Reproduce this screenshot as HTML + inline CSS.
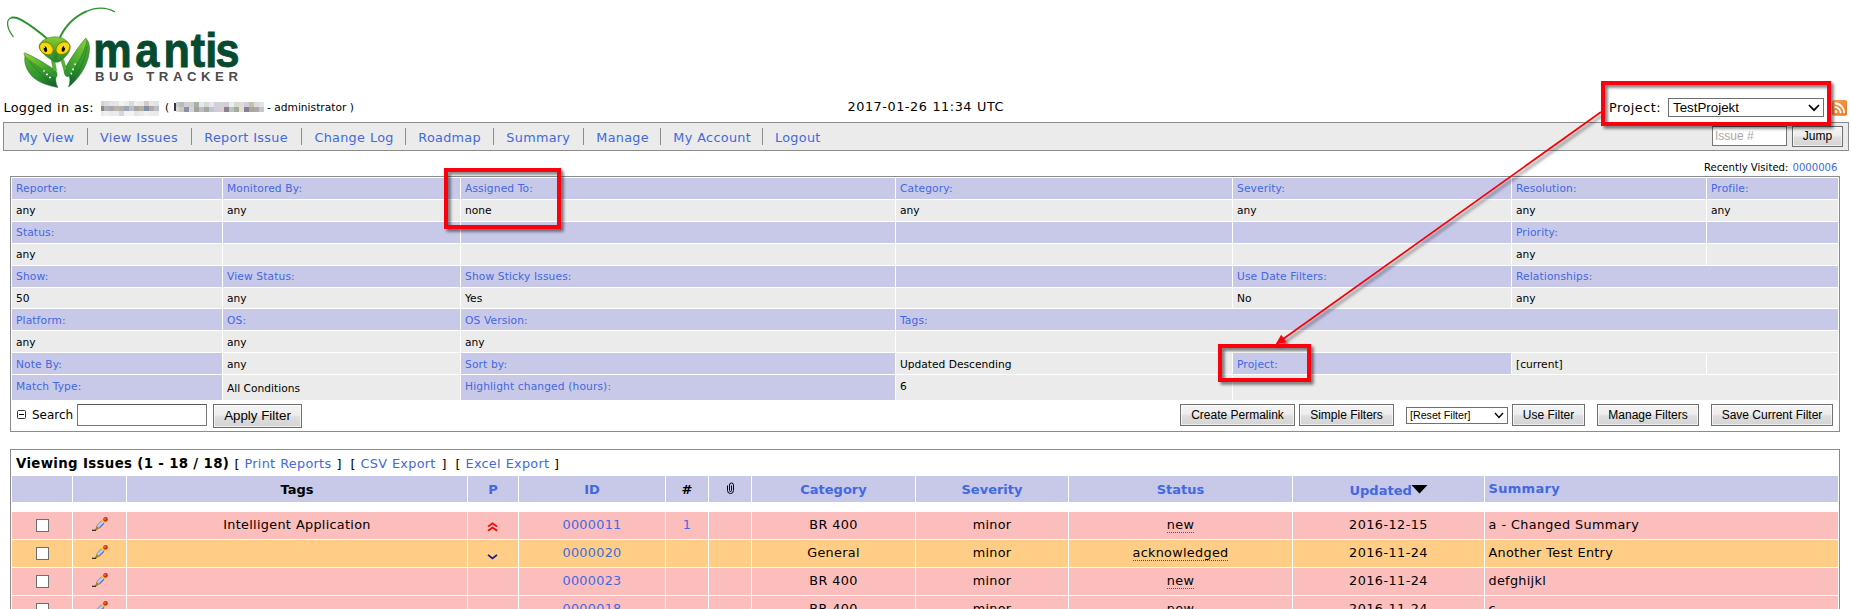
<!DOCTYPE html>
<html lang="en"><head><meta charset="utf-8"><title>View Issues - MantisBT</title>
<style>
html,body{margin:0;padding:0;background:#fff;}
body{width:1851px;height:609px;overflow:hidden;position:relative;font-family:"DejaVu Sans","Liberation Sans",sans-serif;font-size:12.8px;color:#000;}
.t{position:absolute;white-space:nowrap;line-height:1;}
.n{font-size:12.8px;letter-spacing:0.3px;word-spacing:0.4px;}
.s{font-size:10.667px;letter-spacing:0px;}
.x{font-size:10.1px;}
.bb,.t.b{font-size:13px;font-weight:bold;}
.a{font-family:"Liberation Sans",sans-serif;}
.l{color:#4169e1;}
.c{text-align:center;}
.c0{left:12px;width:60px}.c1{left:73px;width:53px}.c2{left:127px;width:340px}.c3{left:468px;width:50px}.c4{left:519px;width:146px}.c5{left:666px;width:42px}.c6{left:709px;width:42px}.c7{left:752px;width:163px}.c8{left:916px;width:152px}.c9{left:1069px;width:223px}.c10{left:1293px;width:191px}.c11{left:1485px;width:353px}
.ab{border-bottom:1px dotted #555;}
.b{position:absolute;}
.lav{background:#c8c8e8;}
.gry{background:#ebebeb;}
.pk{background:#fcbdbd;}
.og{background:#ffcd85;}
.sep{background:#8c8c8c;}
.frame{background:#fff;border:1px solid #8c8c8c;}
.inp{position:absolute;background:#fff;border:1px solid #767676;border-top-color:#5a5a5a;}
.sel{position:absolute;background:#fff;border:1px solid #707070;}
.btn{position:absolute;border:1px solid #707070;background:linear-gradient(#f4f4f4,#ededed 45%,#dedede 55%,#d4d4d4);text-align:center;font-family:"Liberation Sans",sans-serif;color:#000;white-space:nowrap;box-shadow:inset 0 0 0 1px rgba(255,255,255,.6);}
.cb{position:absolute;width:11px;height:11px;border:1px solid #687070;background:#fff;}
</style></head>
<body>
<!-- logo -->
<svg style="position:absolute;left:0;top:0" width="250" height="95" viewBox="0 0 250 95">
<defs>
<linearGradient id="lgA" x1="0" y1="0" x2="0.6" y2="1"><stop offset="0" stop-color="#9bd23f"/><stop offset="0.5" stop-color="#5cb531"/><stop offset="1" stop-color="#2f932e"/></linearGradient>
<linearGradient id="lgB" x1="0.2" y1="0" x2="0.7" y2="1"><stop offset="0" stop-color="#56b030"/><stop offset="0.6" stop-color="#2f952e"/><stop offset="1" stop-color="#17692a"/></linearGradient>
<linearGradient id="lgC" x1="1" y1="0" x2="0.3" y2="1"><stop offset="0" stop-color="#8fcc3a"/><stop offset="0.5" stop-color="#58b331"/><stop offset="1" stop-color="#2f932e"/></linearGradient>
<linearGradient id="lgD" x1="0.9" y1="0" x2="0.2" y2="1"><stop offset="0" stop-color="#4fae30"/><stop offset="0.55" stop-color="#2f952e"/><stop offset="1" stop-color="#17692a"/></linearGradient>
<linearGradient id="lg3" x1="0" y1="0" x2="0" y2="1"><stop offset="0" stop-color="#8ccb30"/><stop offset="0.55" stop-color="#4aa92f"/><stop offset="1" stop-color="#23822d"/></linearGradient>
<radialGradient id="eg" cx="0.5" cy="0.55" r="0.6"><stop offset="0" stop-color="#ffea00"/><stop offset="0.7" stop-color="#fbd400"/><stop offset="1" stop-color="#d79a00"/></radialGradient>
</defs>
<!-- antennae -->
<g fill="none" stroke="#2a942b" stroke-linecap="round">
<path d="M50.2 41.2 C41.2 33.4 31 25.2 21.2 19.8 C17.6 17.9 14.4 17.1 12 17.6" stroke-width="2"/>
<path d="M12 17.6 C9.6 18 8 19.6 7.6 22.2 C7.2 26.6 9.6 32 13.2 36.6" stroke-width="1.2"/>
<path d="M58.6 40.6 C63.4 28.6 72.8 17.6 85.8 11.6" stroke-width="2"/>
<path d="M85.8 11.6 C96 7.2 106.6 7.4 114.4 11.6" stroke-width="1.2"/>
</g>
<!-- left claw: blade then arm -->
<path d="M25.2 55.5 C23.4 62 26.4 71 33.4 77.6 C40.4 83.6 49.4 85.8 57.8 87.5 C56 83.6 55.2 80 56 76.4 C46 72 34 63 25.2 55.5 Z" fill="url(#lgB)" stroke="#1a6428" stroke-width="0.5"/>
<path d="M24.6 52.8 C34 56.4 45 63.2 54 69.4 C56.6 71.2 57.4 73 57 75.4 C56.7 77.4 55.4 78 53.6 77 C45 71.6 34 64.4 26 57.4 C24.2 55.8 23.6 53.6 24.6 52.8 Z" fill="url(#lgA)" stroke="#22782b" stroke-width="0.5"/>
<path d="M29 61 C35 69 45 78.4 56.4 86.2" fill="none" stroke="#16602a" stroke-width="0.5" opacity="0.8"/>
<!-- right claw: blade then arm -->
<path d="M86.4 39.4 C89.4 41.8 90.2 47.6 89 54 C86.8 67.4 78 79.4 68.5 87 C70.2 82.8 70.4 79 69 75.6 C76 66 82.6 52 86.4 39.4 Z" fill="url(#lgD)" stroke="#1a6428" stroke-width="0.5"/>
<path d="M85.8 38 C87.2 38.6 87 41.4 86 44.6 C82.6 55 76.4 66.6 69.6 75.4 C68.2 77.2 66.2 77 65.2 75.2 C63.8 72.8 63.8 70.4 65 68.2 C70.4 58.6 78.2 46.4 85.8 38 Z" fill="url(#lgC)" stroke="#22782b" stroke-width="0.5"/>
<path d="M87 46 C86 58 79 73 69.6 85.4" fill="none" stroke="#16602a" stroke-width="0.5" opacity="0.8"/>
<!-- neck -->
<path d="M51.2 59.4 L54.4 58.6 L56.6 70.8 L53.4 71.6 Z" fill="#5ab431" stroke="#25822c" stroke-width="0.4"/>
<path d="M60.4 58.6 L63.6 59.4 L66.8 69 L63.8 70.6 Z" fill="#5ab431" stroke="#25822c" stroke-width="0.4"/>
<!-- head -->
<path d="M55 36.8 C62 36.6 68.5 40.5 70.2 46.5 C71 51 66.5 56.5 60.5 61 C58 62.8 55.5 62.8 53 61 C46 56.5 39.5 51.5 39 46.5 C40 40.5 47.5 37 55 36.8 Z" fill="url(#lg3)" stroke="#1f7a2c" stroke-width="0.5"/>
<path d="M51.5 50 L56 62 L59.5 50 Z" fill="#1f7a2c" opacity="0.45"/>
<!-- eyes -->
<ellipse cx="46.4" cy="48.3" rx="7.4" ry="5.8" transform="rotate(36 46.4 48.3)" fill="url(#eg)" stroke="#6d7a00" stroke-width="0.7"/>
<ellipse cx="62.9" cy="48.1" rx="7.5" ry="5.8" transform="rotate(-36 62.9 48.1)" fill="url(#eg)" stroke="#6d7a00" stroke-width="0.7"/>
<ellipse cx="45.4" cy="49.2" rx="1.7" ry="3" transform="rotate(-14 45.4 49.2)" fill="#0a0a0a"/>
<ellipse cx="63.4" cy="48.9" rx="1.7" ry="3" transform="rotate(14 63.4 48.9)" fill="#0a0a0a"/>
<circle cx="44.3" cy="47.2" r="0.7" fill="#fff"/><circle cx="64.5" cy="47" r="0.7" fill="#fff"/>
<!-- teeth -->
<g fill="#fff"><ellipse cx="44" cy="71" rx="1" ry="0.8"/><ellipse cx="47" cy="74.4" rx="1.1" ry="0.9"/><ellipse cx="50" cy="77.4" rx="1.1" ry="0.9"/>
<ellipse cx="75" cy="64.2" rx="0.8" ry="1"/><ellipse cx="73.1" cy="69.4" rx="0.9" ry="1.1"/><ellipse cx="71.4" cy="73.6" rx="0.9" ry="1.1"/></g>
<text transform="scale(0.9,1)" x="103.6 150.4 181.6 212 228.2 239.4" y="67.4" font-family="Liberation Sans, sans-serif" font-weight="bold" font-size="48" fill="#064a30" stroke="#064a30" stroke-width="0.9">mantis</text>
<text x="95" y="81.2" font-family="Liberation Sans, sans-serif" font-weight="bold" font-size="13.2" fill="#4f4a4a" textLength="143" lengthAdjust="spacing">BUG TRACKER</text>
</svg>
<!-- login info -->
<span class="t n" style="left:3.5px;top:102px;">Logged in as:</span>
<svg style="position:absolute;left:0;top:95px" width="280" height="25" viewBox="0 95 280 25" shape-rendering="crispEdges"><rect x="101" y="101" width="3" height="5" fill="#d6d0d0"/><rect x="104" y="101" width="5" height="5" fill="#dcdcdc"/><rect x="109" y="101" width="5" height="5" fill="#e4e4e4"/><rect x="114" y="101" width="5" height="5" fill="#e2e6ea"/><rect x="119" y="101" width="5" height="5" fill="#f2f4f4"/><rect x="124" y="101" width="5" height="5" fill="#f0ece8"/><rect x="129" y="101" width="5" height="5" fill="#d8dce0"/><rect x="134" y="101" width="5" height="5" fill="#f2eeea"/><rect x="139" y="101" width="5" height="5" fill="#e8eaf0"/><rect x="144" y="101" width="5" height="5" fill="#d2ccc8"/><rect x="149" y="101" width="5" height="5" fill="#e8e8e8"/><rect x="154" y="101" width="5" height="5" fill="#e0e4e8"/><rect x="101" y="106" width="3" height="5" fill="#8c8878"/><rect x="104" y="106" width="5" height="5" fill="#b0b0b8"/><rect x="109" y="106" width="5" height="5" fill="#aaa8a8"/><rect x="114" y="106" width="5" height="5" fill="#b8b4b0"/><rect x="119" y="106" width="5" height="5" fill="#b4b0ac"/><rect x="124" y="106" width="5" height="5" fill="#9ca4b8"/><rect x="129" y="106" width="5" height="5" fill="#b8c0c4"/><rect x="134" y="106" width="5" height="5" fill="#a8a4a4"/><rect x="139" y="106" width="5" height="5" fill="#b4b0a0"/><rect x="144" y="106" width="5" height="5" fill="#8090a8"/><rect x="149" y="106" width="5" height="5" fill="#b0a8a8"/><rect x="154" y="106" width="5" height="5" fill="#b8c0c4"/><rect x="101" y="111" width="3" height="5" fill="#ece8ec"/><rect x="104" y="111" width="5" height="5" fill="#eeeef0"/><rect x="109" y="111" width="5" height="5" fill="#ece8e6"/><rect x="114" y="111" width="5" height="5" fill="#e8ecf0"/><rect x="119" y="111" width="5" height="5" fill="#dcd4dc"/><rect x="124" y="111" width="5" height="5" fill="#f2f4f4"/><rect x="129" y="111" width="5" height="5" fill="#f2f4f4"/><rect x="134" y="111" width="5" height="5" fill="#e8e4e4"/><rect x="139" y="111" width="5" height="5" fill="#eaeaee"/><rect x="144" y="111" width="5" height="5" fill="#f0f0f0"/><rect x="149" y="111" width="5" height="5" fill="#ecebeb"/><rect x="154" y="111" width="5" height="5" fill="#e8eaee"/><rect x="176" y="102" width="3" height="5" fill="#c8cccc"/><rect x="179" y="102" width="5" height="5" fill="#b4bcbc"/><rect x="184" y="102" width="5" height="5" fill="#d0d0d4"/><rect x="189" y="102" width="5" height="5" fill="#d0d0d0"/><rect x="194" y="102" width="5" height="5" fill="#a8b0a4"/><rect x="199" y="102" width="5" height="5" fill="#e4e8f0"/><rect x="204" y="102" width="5" height="5" fill="#d8d8d4"/><rect x="209" y="102" width="5" height="5" fill="#e4e8ec"/><rect x="214" y="102" width="5" height="5" fill="#d8d0d8"/><rect x="219" y="102" width="5" height="5" fill="#ccd4d8"/><rect x="224" y="102" width="5" height="5" fill="#d4ccd4"/><rect x="229" y="102" width="5" height="5" fill="#e8f0ec"/><rect x="234" y="102" width="5" height="5" fill="#d8d8cc"/><rect x="239" y="102" width="5" height="5" fill="#dcdce0"/><rect x="244" y="102" width="5" height="5" fill="#d4ccd8"/><rect x="249" y="102" width="5" height="5" fill="#c0c4a8"/><rect x="254" y="102" width="5" height="5" fill="#dcdce0"/><rect x="259" y="102" width="5" height="5" fill="#e0e4e8"/><rect x="176" y="107" width="3" height="5" fill="#dcd8d0"/><rect x="179" y="107" width="5" height="5" fill="#c8ccb8"/><rect x="184" y="107" width="5" height="5" fill="#8890a8"/><rect x="189" y="107" width="5" height="5" fill="#d8d0dc"/><rect x="194" y="107" width="5" height="5" fill="#a0a498"/><rect x="199" y="107" width="5" height="5" fill="#c0bcc4"/><rect x="204" y="107" width="5" height="5" fill="#a4a8a0"/><rect x="209" y="107" width="5" height="5" fill="#b8c8d4"/><rect x="214" y="107" width="5" height="5" fill="#d4ccd4"/><rect x="219" y="107" width="5" height="5" fill="#d4d0d0"/><rect x="224" y="107" width="5" height="5" fill="#8c8090"/><rect x="229" y="107" width="5" height="5" fill="#b8c4c0"/><rect x="234" y="107" width="5" height="5" fill="#a0ac9c"/><rect x="239" y="107" width="5" height="5" fill="#e4e0cc"/><rect x="244" y="107" width="5" height="5" fill="#888098"/><rect x="249" y="107" width="5" height="5" fill="#a8a898"/><rect x="254" y="107" width="5" height="5" fill="#b0a8a8"/><rect x="259" y="107" width="5" height="5" fill="#c0c8d0"/><rect x="174.3" y="103" width="1.4" height="8" fill="#34344e"/></svg>
<span class="t s" style="left:165px;top:103px;">(</span>
<span class="t s" style="left:267px;top:103px;">- administrator )</span>
<span class="t n" style="left:847.5px;top:101px;letter-spacing:0.55px;">2017-01-26 11:34 UTC</span>
<span class="t n" style="left:1609px;top:102px;letter-spacing:0.5px;">Project:</span>
<div class="sel" style="left:1668px;top:98px;width:154px;height:17px;"><span class="t a" style="left:4px;top:2px;font-size:13.333px">TestProjekt</span><svg style="position:absolute;right:3px;top:5px" width="12" height="8" viewBox="0 0 12 8"><path d="M1 1 L6 6.2 L11 1" fill="none" stroke="#000" stroke-width="1.7"/></svg></div>
<svg style="position:absolute;left:1831.6px;top:100px" width="15.4" height="15.8" viewBox="0 0 16 16" preserveAspectRatio="none"><defs><linearGradient id="rg" x1="0" y1="0" x2="1" y2="1"><stop offset="0" stop-color="#f9a45a"/><stop offset="1" stop-color="#e8751c"/></linearGradient></defs><rect x="0" y="0" width="16" height="16" rx="3" fill="url(#rg)"/><circle cx="4.1" cy="12" r="1.5" fill="#fff"/><path d="M2.6 7 A6.4 6.4 0 0 1 9 13.4" fill="none" stroke="#fff" stroke-width="1.8"/><path d="M2.6 3.3 A10.1 10.1 0 0 1 12.7 13.4" fill="none" stroke="#fff" stroke-width="1.8"/></svg>
<!-- main menu -->
<div class="b gry" style="left:3px;top:122px;width:1844px;height:27px;border:1px solid #8c8c8c;"></div>
<a class="t n l" style="left:18.7px;top:132px;">My View</a>
<a class="t n l" style="left:100px;top:132px;">View Issues</a>
<a class="t n l" style="left:204.3px;top:132px;">Report Issue</a>
<a class="t n l" style="left:314.4px;top:132px;">Change Log</a>
<a class="t n l" style="left:418.3px;top:132px;">Roadmap</a>
<a class="t n l" style="left:506.3px;top:132px;">Summary</a>
<a class="t n l" style="left:596.3px;top:132px;">Manage</a>
<a class="t n l" style="left:673.3px;top:132px;">My Account</a>
<a class="t n l" style="left:775px;top:132px;">Logout</a>
<div class="b sep" style="left:87px;top:128px;width:1px;height:17px;"></div>
<div class="b sep" style="left:191px;top:128px;width:1px;height:17px;"></div>
<div class="b sep" style="left:301px;top:128px;width:1px;height:17px;"></div>
<div class="b sep" style="left:405px;top:128px;width:1px;height:17px;"></div>
<div class="b sep" style="left:493px;top:128px;width:1px;height:17px;"></div>
<div class="b sep" style="left:583px;top:128px;width:1px;height:17px;"></div>
<div class="b sep" style="left:660px;top:128px;width:1px;height:17px;"></div>
<div class="b sep" style="left:762px;top:128px;width:1px;height:17px;"></div>
<div class="inp" style="left:1712px;top:126px;width:73px;height:18px;"><span class="t a" style="left:2px;top:3px;font-size:12px;color:#a9a9a9">Issue #</span></div>
<div class="btn" style="left:1792px;top:126px;width:49px;height:19px;font-size:12px;line-height:19px;">Jump</div>
<span class="t x" style="left:1704px;top:163px;">Recently Visited:</span>
<a class="t x l" style="left:1792.5px;top:163px;">0000006</a>
<!-- filter box -->
<div class="b frame" style="left:10px;top:176px;width:1828px;height:254px;"></div>
<div class="b lav" style="left:12px;top:178px;width:210px;height:21px;"></div>
<a class="t s l" style="left:16px;top:184px;letter-spacing:0.13px;">Reporter:</a>
<div class="b lav" style="left:223px;top:178px;width:237px;height:21px;"></div>
<a class="t s l" style="left:227px;top:184px;letter-spacing:0.13px;">Monitored By:</a>
<div class="b lav" style="left:461px;top:178px;width:434px;height:21px;"></div>
<a class="t s l" style="left:465px;top:184px;letter-spacing:0.13px;">Assigned To:</a>
<div class="b lav" style="left:896px;top:178px;width:336px;height:21px;"></div>
<a class="t s l" style="left:900px;top:184px;letter-spacing:0.13px;">Category:</a>
<div class="b lav" style="left:1233px;top:178px;width:278px;height:21px;"></div>
<a class="t s l" style="left:1237px;top:184px;letter-spacing:0.13px;">Severity:</a>
<div class="b lav" style="left:1512px;top:178px;width:194px;height:21px;"></div>
<a class="t s l" style="left:1516px;top:184px;letter-spacing:0.13px;">Resolution:</a>
<div class="b lav" style="left:1707px;top:178px;width:131px;height:21px;"></div>
<a class="t s l" style="left:1711px;top:184px;letter-spacing:0.13px;">Profile:</a>
<div class="b gry" style="left:12px;top:200px;width:210px;height:21px;"></div>
<span class="t s" style="left:16px;top:206px;">any</span>
<div class="b gry" style="left:223px;top:200px;width:237px;height:21px;"></div>
<span class="t s" style="left:227px;top:206px;">any</span>
<div class="b gry" style="left:461px;top:200px;width:434px;height:21px;"></div>
<span class="t s" style="left:465px;top:206px;">none</span>
<div class="b gry" style="left:896px;top:200px;width:336px;height:21px;"></div>
<span class="t s" style="left:900px;top:206px;">any</span>
<div class="b gry" style="left:1233px;top:200px;width:278px;height:21px;"></div>
<span class="t s" style="left:1237px;top:206px;">any</span>
<div class="b gry" style="left:1512px;top:200px;width:194px;height:21px;"></div>
<span class="t s" style="left:1516px;top:206px;">any</span>
<div class="b gry" style="left:1707px;top:200px;width:131px;height:21px;"></div>
<span class="t s" style="left:1711px;top:206px;">any</span>
<div class="b lav" style="left:12px;top:222px;width:210px;height:21px;"></div>
<a class="t s l" style="left:16px;top:228px;letter-spacing:0.13px;">Status:</a>
<div class="b lav" style="left:223px;top:222px;width:237px;height:21px;"></div>
<div class="b lav" style="left:461px;top:222px;width:434px;height:21px;"></div>
<div class="b lav" style="left:896px;top:222px;width:336px;height:21px;"></div>
<div class="b lav" style="left:1233px;top:222px;width:278px;height:21px;"></div>
<div class="b lav" style="left:1512px;top:222px;width:194px;height:21px;"></div>
<a class="t s l" style="left:1516px;top:228px;letter-spacing:0.13px;">Priority:</a>
<div class="b lav" style="left:1707px;top:222px;width:131px;height:21px;"></div>
<div class="b gry" style="left:12px;top:244px;width:210px;height:21px;"></div>
<span class="t s" style="left:16px;top:250px;">any</span>
<div class="b gry" style="left:223px;top:244px;width:237px;height:21px;"></div>
<div class="b gry" style="left:461px;top:244px;width:434px;height:21px;"></div>
<div class="b gry" style="left:896px;top:244px;width:336px;height:21px;"></div>
<div class="b gry" style="left:1233px;top:244px;width:278px;height:21px;"></div>
<div class="b gry" style="left:1512px;top:244px;width:194px;height:21px;"></div>
<span class="t s" style="left:1516px;top:250px;">any</span>
<div class="b gry" style="left:1707px;top:244px;width:131px;height:21px;"></div>
<div class="b lav" style="left:12px;top:266px;width:210px;height:21px;"></div>
<a class="t s l" style="left:16px;top:272px;letter-spacing:0.13px;">Show:</a>
<div class="b lav" style="left:223px;top:266px;width:237px;height:21px;"></div>
<a class="t s l" style="left:227px;top:272px;letter-spacing:0.13px;">View Status:</a>
<div class="b lav" style="left:461px;top:266px;width:434px;height:21px;"></div>
<a class="t s l" style="left:465px;top:272px;letter-spacing:0.13px;">Show Sticky Issues:</a>
<div class="b lav" style="left:896px;top:266px;width:336px;height:21px;"></div>
<div class="b lav" style="left:1233px;top:266px;width:278px;height:21px;"></div>
<a class="t s l" style="left:1237px;top:272px;letter-spacing:0.13px;">Use Date Filters:</a>
<div class="b lav" style="left:1512px;top:266px;width:326px;height:21px;"></div>
<a class="t s l" style="left:1516px;top:272px;letter-spacing:0.13px;">Relationships:</a>
<div class="b gry" style="left:12px;top:288px;width:210px;height:20px;"></div>
<span class="t s" style="left:16px;top:294px;">50</span>
<div class="b gry" style="left:223px;top:288px;width:237px;height:20px;"></div>
<span class="t s" style="left:227px;top:294px;">any</span>
<div class="b gry" style="left:461px;top:288px;width:434px;height:20px;"></div>
<span class="t s" style="left:465px;top:294px;">Yes</span>
<div class="b gry" style="left:896px;top:288px;width:336px;height:20px;"></div>
<div class="b gry" style="left:1233px;top:288px;width:278px;height:20px;"></div>
<span class="t s" style="left:1237px;top:294px;">No</span>
<div class="b gry" style="left:1512px;top:288px;width:326px;height:20px;"></div>
<span class="t s" style="left:1516px;top:294px;">any</span>
<div class="b lav" style="left:12px;top:309px;width:210px;height:21px;"></div>
<a class="t s l" style="left:16px;top:316px;letter-spacing:0.13px;">Platform:</a>
<div class="b lav" style="left:223px;top:309px;width:237px;height:21px;"></div>
<a class="t s l" style="left:227px;top:316px;letter-spacing:0.13px;">OS:</a>
<div class="b lav" style="left:461px;top:309px;width:434px;height:21px;"></div>
<a class="t s l" style="left:465px;top:316px;letter-spacing:0.13px;">OS Version:</a>
<div class="b lav" style="left:896px;top:309px;width:942px;height:21px;"></div>
<a class="t s l" style="left:900px;top:316px;letter-spacing:0.13px;">Tags:</a>
<div class="b gry" style="left:12px;top:331px;width:210px;height:21px;"></div>
<span class="t s" style="left:16px;top:338px;">any</span>
<div class="b gry" style="left:223px;top:331px;width:237px;height:21px;"></div>
<span class="t s" style="left:227px;top:338px;">any</span>
<div class="b gry" style="left:461px;top:331px;width:434px;height:21px;"></div>
<span class="t s" style="left:465px;top:338px;">any</span>
<div class="b gry" style="left:896px;top:331px;width:942px;height:21px;"></div>
<div class="b lav" style="left:12px;top:353px;width:210px;height:21px;"></div>
<a class="t s l" style="left:16px;top:360px;letter-spacing:0.13px;">Note By:</a>
<div class="b gry" style="left:223px;top:353px;width:237px;height:21px;"></div>
<span class="t s" style="left:227px;top:360px;">any</span>
<div class="b lav" style="left:461px;top:353px;width:434px;height:21px;"></div>
<a class="t s l" style="left:465px;top:360px;letter-spacing:0.13px;">Sort by:</a>
<div class="b gry" style="left:896px;top:353px;width:336px;height:21px;"></div>
<span class="t s" style="left:900px;top:360px;">Updated Descending</span>
<div class="b lav" style="left:1233px;top:353px;width:278px;height:21px;"></div>
<a class="t s l" style="left:1237px;top:360px;letter-spacing:0.13px;">Project:</a>
<div class="b gry" style="left:1512px;top:353px;width:194px;height:21px;"></div>
<span class="t s" style="left:1516px;top:360px;">[current]</span>
<div class="b gry" style="left:1707px;top:353px;width:131px;height:21px;"></div>
<div class="b lav" style="left:12px;top:375px;width:210px;height:25px;"></div>
<a class="t s l" style="left:16px;top:382px;letter-spacing:0.13px;">Match Type:</a>
<div class="b gry" style="left:223px;top:375px;width:237px;height:25px;"></div>
<span class="t s" style="left:227px;top:384px;">All Conditions</span>
<div class="b lav" style="left:461px;top:375px;width:434px;height:25px;"></div>
<a class="t s l" style="left:465px;top:382px;letter-spacing:0.13px;">Highlight changed (hours):</a>
<div class="b gry" style="left:896px;top:375px;width:336px;height:25px;"></div>
<span class="t s" style="left:900px;top:382px;">6</span>
<div class="b gry" style="left:1233px;top:375px;width:605px;height:25px;"></div>
<svg style="position:absolute;left:17px;top:410px" width="9" height="9" viewBox="0 0 9 9"><rect x="0.5" y="0.5" width="8" height="8" rx="1" fill="#fff" stroke="#333"/><path d="M2 4.5H7" stroke="#000"/></svg>
<span class="t n" style="left:32px;top:409px;font-size:12px;letter-spacing:0px;">Search</span>
<div class="inp" style="left:77px;top:404px;width:128px;height:20px;"></div>
<div class="btn" style="left:213px;top:404px;width:87px;height:22px;font-size:13.333px;line-height:22px;">Apply Filter</div>
<div class="btn" style="left:1180px;top:404px;width:113px;height:20px;font-size:12px;line-height:20px;">Create Permalink</div>
<div class="btn" style="left:1299px;top:404px;width:93px;height:20px;font-size:12px;line-height:20px;">Simple Filters</div>
<div class="sel" style="left:1406px;top:407px;width:100px;height:15px;"><span class="t a" style="left:3px;top:2px;font-size:10.667px">[Reset Filter]</span><svg style="position:absolute;right:3px;top:4px" width="10" height="7" viewBox="0 0 10 7"><path d="M1 1 L5 5.5 L9 1" fill="none" stroke="#000" stroke-width="1.4"/></svg></div>
<div class="btn" style="left:1512px;top:404px;width:71px;height:20px;font-size:12px;line-height:20px;">Use Filter</div>
<div class="btn" style="left:1597px;top:404px;width:100px;height:20px;font-size:12px;line-height:20px;">Manage Filters</div>
<div class="btn" style="left:1711px;top:404px;width:120px;height:20px;font-size:12px;line-height:20px;">Save Current Filter</div>
<!-- issue list -->
<div class="b frame" style="left:10px;top:449px;width:1828px;height:170px;"></div>
<span class="t b" style="left:16px;top:457px;font-size:13.33px;letter-spacing:0.34px;">Viewing Issues (1 - 18 / 18)</span>
<span class="t n" style="left:234.5px;top:458px;">[</span>
<a class="t n l" style="left:244.5px;top:458px;">Print Reports</a>
<span class="t n" style="left:336.5px;top:458px;">]</span>
<span class="t n" style="left:350.5px;top:458px;">[</span>
<a class="t n l" style="left:360.5px;top:458px;">CSV Export</a>
<span class="t n" style="left:441.5px;top:458px;">]</span>
<span class="t n" style="left:455.5px;top:458px;">[</span>
<a class="t n l" style="left:465.5px;top:458px;">Excel Export</a>
<span class="t n" style="left:554px;top:458px;">]</span>
<div class="b lav" style="left:12px;top:476px;width:60px;height:26px;"></div>
<div class="b lav" style="left:73px;top:476px;width:53px;height:26px;"></div>
<div class="b lav" style="left:127px;top:476px;width:340px;height:26px;"></div>
<div class="b lav" style="left:468px;top:476px;width:50px;height:26px;"></div>
<div class="b lav" style="left:519px;top:476px;width:146px;height:26px;"></div>
<div class="b lav" style="left:666px;top:476px;width:42px;height:26px;"></div>
<div class="b lav" style="left:709px;top:476px;width:42px;height:26px;"></div>
<div class="b lav" style="left:752px;top:476px;width:163px;height:26px;"></div>
<div class="b lav" style="left:916px;top:476px;width:152px;height:26px;"></div>
<div class="b lav" style="left:1069px;top:476px;width:223px;height:26px;"></div>
<div class="b lav" style="left:1293px;top:476px;width:191px;height:26px;"></div>
<div class="b lav" style="left:1485px;top:476px;width:353px;height:26px;"></div>
<span class="t b c c2" style="top:483px;">Tags</span>
<a class="t b c c3 l" style="top:483px;">P</a>
<a class="t b c c4 l" style="top:483px;">ID</a>
<span class="t b c c5" style="top:483px;">#</span>
<a class="t b c c7 l" style="top:483px;">Category</a>
<a class="t b c c8 l" style="top:483px;">Severity</a>
<a class="t b c c9 l" style="top:483px;">Status</a>
<a class="t b l" style="left:1349.5px;top:484px;">Updated</a>
<svg style="position:absolute;left:1411px;top:485px" width="17" height="9" viewBox="0 0 17 9"><path d="M0.5 0 H16.5 L8.5 8.5 Z" fill="#000"/></svg>
<a class="t b l" style="left:1488.5px;top:482px;letter-spacing:0.3px;">Summary</a>
<svg style="position:absolute;left:726px;top:482px" width="9" height="12" viewBox="0 0 9 12"><path d="M1.5 3.5 V8.5 A3 3 0 0 0 7.5 8.5 V3 A2 2 0 0 0 3.5 3 V8.5 A1 1 0 0 0 5.5 8.5 V3.5" fill="none" stroke="#000" stroke-width="1"/></svg>
<div class="b pk" style="left:12px;top:512px;width:60px;height:27px;"></div>
<div class="b pk" style="left:73px;top:512px;width:53px;height:27px;"></div>
<div class="b pk" style="left:127px;top:512px;width:340px;height:27px;"></div>
<div class="b pk" style="left:468px;top:512px;width:50px;height:27px;"></div>
<div class="b pk" style="left:519px;top:512px;width:146px;height:27px;"></div>
<div class="b pk" style="left:666px;top:512px;width:42px;height:27px;"></div>
<div class="b pk" style="left:709px;top:512px;width:42px;height:27px;"></div>
<div class="b pk" style="left:752px;top:512px;width:163px;height:27px;"></div>
<div class="b pk" style="left:916px;top:512px;width:152px;height:27px;"></div>
<div class="b pk" style="left:1069px;top:512px;width:223px;height:27px;"></div>
<div class="b pk" style="left:1293px;top:512px;width:191px;height:27px;"></div>
<div class="b pk" style="left:1485px;top:512px;width:353px;height:27px;"></div>
<div class="cb" style="left:36px;top:519px"></div>
<svg style="position:absolute;left:92px;top:516px" width="17" height="16" viewBox="0 0 17 16"><path d="M0 14.2 H3.6 L4.4 13.2" fill="none" stroke="#000" stroke-width="1.1"/><path d="M3.3 13.9 L4.5 9.7 L7.5 12.7 Z" fill="#a08426"/><path d="M6.1 11 L10.9 6.1" stroke="#6470c8" stroke-width="4.4"/><path d="M5.9 10.7 L10.6 5.9" stroke="#c0c8f4" stroke-width="2.6"/><path d="M11 6 L12.2 4.8" stroke="#ecd020" stroke-width="4.6"/><circle cx="13.5" cy="3.4" r="2.3" fill="#d42c14"/><circle cx="13" cy="2.9" r="1" fill="#ee6a50"/></svg>
<span class="t n c c2" style="top:519px;">Intelligent Application</span>
<svg style="position:absolute;left:487px;top:522px" width="11" height="10" viewBox="0 0 11 10"><path d="M1 4.6 L5.5 1.4 L10 4.6 M1 8.8 L5.5 5.6 L10 8.8" fill="none" stroke="#f00" stroke-width="1.7"/></svg>
<a class="t n c c4 l" style="top:519px;">0000011</a>
<a class="t n c c5 l" style="top:519px;">1</a>
<span class="t n c c7" style="top:519px;">BR 400</span>
<span class="t n c c8" style="top:519px;">minor</span>
<span class="t n c c9" style="top:519px;"><span class="ab">new</span></span>
<span class="t n c c10" style="top:519px;letter-spacing:0.45px;">2016-12-15</span>
<span class="t n" style="left:1488.5px;top:519px;">a - Changed Summary</span>
<div class="b og" style="left:12px;top:540px;width:60px;height:27px;"></div>
<div class="b og" style="left:73px;top:540px;width:53px;height:27px;"></div>
<div class="b og" style="left:127px;top:540px;width:340px;height:27px;"></div>
<div class="b og" style="left:468px;top:540px;width:50px;height:27px;"></div>
<div class="b og" style="left:519px;top:540px;width:146px;height:27px;"></div>
<div class="b og" style="left:666px;top:540px;width:42px;height:27px;"></div>
<div class="b og" style="left:709px;top:540px;width:42px;height:27px;"></div>
<div class="b og" style="left:752px;top:540px;width:163px;height:27px;"></div>
<div class="b og" style="left:916px;top:540px;width:152px;height:27px;"></div>
<div class="b og" style="left:1069px;top:540px;width:223px;height:27px;"></div>
<div class="b og" style="left:1293px;top:540px;width:191px;height:27px;"></div>
<div class="b og" style="left:1485px;top:540px;width:353px;height:27px;"></div>
<div class="cb" style="left:36px;top:547px"></div>
<svg style="position:absolute;left:92px;top:544px" width="17" height="16" viewBox="0 0 17 16"><path d="M0 14.2 H3.6 L4.4 13.2" fill="none" stroke="#000" stroke-width="1.1"/><path d="M3.3 13.9 L4.5 9.7 L7.5 12.7 Z" fill="#a08426"/><path d="M6.1 11 L10.9 6.1" stroke="#6470c8" stroke-width="4.4"/><path d="M5.9 10.7 L10.6 5.9" stroke="#c0c8f4" stroke-width="2.6"/><path d="M11 6 L12.2 4.8" stroke="#ecd020" stroke-width="4.6"/><circle cx="13.5" cy="3.4" r="2.3" fill="#d42c14"/><circle cx="13" cy="2.9" r="1" fill="#ee6a50"/></svg>
<svg style="position:absolute;left:487px;top:554px" width="11" height="6" viewBox="0 0 11 6"><path d="M1 0.8 L5.5 4.4 L10 0.8" fill="none" stroke="#14149c" stroke-width="1.7"/></svg>
<a class="t n c c4 l" style="top:547px;">0000020</a>
<span class="t n c c7" style="top:547px;">General</span>
<span class="t n c c8" style="top:547px;">minor</span>
<span class="t n c c9" style="top:547px;"><span class="ab">acknowledged</span></span>
<span class="t n c c10" style="top:547px;letter-spacing:0.45px;">2016-11-24</span>
<span class="t n" style="left:1488.5px;top:547px;">Another Test Entry</span>
<div class="b pk" style="left:12px;top:568px;width:60px;height:27px;"></div>
<div class="b pk" style="left:73px;top:568px;width:53px;height:27px;"></div>
<div class="b pk" style="left:127px;top:568px;width:340px;height:27px;"></div>
<div class="b pk" style="left:468px;top:568px;width:50px;height:27px;"></div>
<div class="b pk" style="left:519px;top:568px;width:146px;height:27px;"></div>
<div class="b pk" style="left:666px;top:568px;width:42px;height:27px;"></div>
<div class="b pk" style="left:709px;top:568px;width:42px;height:27px;"></div>
<div class="b pk" style="left:752px;top:568px;width:163px;height:27px;"></div>
<div class="b pk" style="left:916px;top:568px;width:152px;height:27px;"></div>
<div class="b pk" style="left:1069px;top:568px;width:223px;height:27px;"></div>
<div class="b pk" style="left:1293px;top:568px;width:191px;height:27px;"></div>
<div class="b pk" style="left:1485px;top:568px;width:353px;height:27px;"></div>
<div class="cb" style="left:36px;top:575px"></div>
<svg style="position:absolute;left:92px;top:572px" width="17" height="16" viewBox="0 0 17 16"><path d="M0 14.2 H3.6 L4.4 13.2" fill="none" stroke="#000" stroke-width="1.1"/><path d="M3.3 13.9 L4.5 9.7 L7.5 12.7 Z" fill="#a08426"/><path d="M6.1 11 L10.9 6.1" stroke="#6470c8" stroke-width="4.4"/><path d="M5.9 10.7 L10.6 5.9" stroke="#c0c8f4" stroke-width="2.6"/><path d="M11 6 L12.2 4.8" stroke="#ecd020" stroke-width="4.6"/><circle cx="13.5" cy="3.4" r="2.3" fill="#d42c14"/><circle cx="13" cy="2.9" r="1" fill="#ee6a50"/></svg>
<a class="t n c c4 l" style="top:575px;">0000023</a>
<span class="t n c c7" style="top:575px;">BR 400</span>
<span class="t n c c8" style="top:575px;">minor</span>
<span class="t n c c9" style="top:575px;"><span class="ab">new</span></span>
<span class="t n c c10" style="top:575px;letter-spacing:0.45px;">2016-11-24</span>
<span class="t n" style="left:1488.5px;top:575px;">defghijkl</span>
<div class="b pk" style="left:12px;top:596px;width:60px;height:27px;"></div>
<div class="b pk" style="left:73px;top:596px;width:53px;height:27px;"></div>
<div class="b pk" style="left:127px;top:596px;width:340px;height:27px;"></div>
<div class="b pk" style="left:468px;top:596px;width:50px;height:27px;"></div>
<div class="b pk" style="left:519px;top:596px;width:146px;height:27px;"></div>
<div class="b pk" style="left:666px;top:596px;width:42px;height:27px;"></div>
<div class="b pk" style="left:709px;top:596px;width:42px;height:27px;"></div>
<div class="b pk" style="left:752px;top:596px;width:163px;height:27px;"></div>
<div class="b pk" style="left:916px;top:596px;width:152px;height:27px;"></div>
<div class="b pk" style="left:1069px;top:596px;width:223px;height:27px;"></div>
<div class="b pk" style="left:1293px;top:596px;width:191px;height:27px;"></div>
<div class="b pk" style="left:1485px;top:596px;width:353px;height:27px;"></div>
<div class="cb" style="left:36px;top:603px"></div>
<svg style="position:absolute;left:92px;top:600px" width="17" height="16" viewBox="0 0 17 16"><path d="M0 14.2 H3.6 L4.4 13.2" fill="none" stroke="#000" stroke-width="1.1"/><path d="M3.3 13.9 L4.5 9.7 L7.5 12.7 Z" fill="#a08426"/><path d="M6.1 11 L10.9 6.1" stroke="#6470c8" stroke-width="4.4"/><path d="M5.9 10.7 L10.6 5.9" stroke="#c0c8f4" stroke-width="2.6"/><path d="M11 6 L12.2 4.8" stroke="#ecd020" stroke-width="4.6"/><circle cx="13.5" cy="3.4" r="2.3" fill="#d42c14"/><circle cx="13" cy="2.9" r="1" fill="#ee6a50"/></svg>
<a class="t n c c4 l" style="top:603px;">0000018</a>
<span class="t n c c7" style="top:603px;">BR 400</span>
<span class="t n c c8" style="top:603px;">minor</span>
<span class="t n c c9" style="top:603px;"><span class="ab">new</span></span>
<span class="t n c c10" style="top:603px;letter-spacing:0.45px;">2016-11-24</span>
<span class="t n" style="left:1488.5px;top:603px;">c</span>
<!-- annotations -->
<svg style="position:absolute;left:0;top:0;pointer-events:none" width="1851" height="609" viewBox="0 0 1851 609">
<defs><filter id="ds" x="-5%" y="-5%" width="115%" height="115%"><feDropShadow dx="2.6" dy="2.6" stdDeviation="1.4" flood-color="#000" flood-opacity="0.52"/></filter></defs>
<g filter="url(#ds)" fill="none" stroke="#fb0007">
<path d="M1601 112 L1281 340.5" stroke-width="1.7"/>
<path d="M1275.5 344.5 L1286.5 342.2 L1281.2 334.8 Z" fill="#fb0007" stroke="none"/>
<rect x="446" y="170" width="113" height="57" stroke-width="4"/>
<rect x="1603" y="83" width="226" height="41" stroke-width="4"/>
<rect x="1220" y="346" width="89" height="34" stroke-width="4"/>
</g>
</svg>
</body></html>
